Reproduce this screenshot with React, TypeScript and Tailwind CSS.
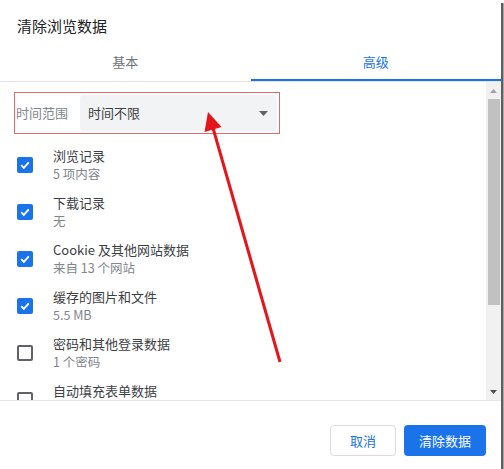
import React from 'react';

const items = [
  { title: '浏览记录', sub: '5 项内容', checked: true },
  { title: '下载记录', sub: '无', checked: true },
  { title: 'Cookie 及其他网站数据', sub: '来自 13 个网站', checked: true },
  { title: '缓存的图片和文件', sub: '5.5 MB', checked: true },
  { title: '密码和其他登录数据', sub: '1 个密码', checked: false },
  { title: '自动填充表单数据', sub: '', checked: false },
];

function Checkbox({ checked }: { checked: boolean }) {
  if (checked) {
    return (
      <div className="w-4 h-4 rounded-[2px] bg-[#1a73e8] flex items-center justify-center shrink-0">
        <svg width="12" height="12" viewBox="0 0 12 12">
          <path d="M2.2 6.2l2.6 2.6 5-5.4" fill="none" stroke="#fff" strokeWidth="1.9" />
        </svg>
      </div>
    );
  }
  return <div className="w-4 h-4 rounded-[2px] border-2 border-[#5f6368] shrink-0" />;
}

export default function App() {
  return (
    <div
      className="relative w-[504px] h-[469px] bg-white overflow-hidden flex"
      style={{ fontFamily: '"Noto Sans CJK SC", "Noto Sans", sans-serif' }}
    >
      <div className="w-[501px] h-full flex flex-col">
        <div className="pt-[16px] pl-[17px] h-[44px] text-[15px] leading-[20px] text-[#202124]">清除浏览数据</div>

        <div className="flex h-[38px] border-b border-[#e4e4e4]">
          <div className="flex-1 flex items-center justify-center text-[13px] text-[#6f7378] pb-[2px]">基本</div>
          <div className="flex-1 flex items-center justify-center text-[13px] text-[#1a73e8] border-b-2 border-[#1a73e8]">高级</div>
        </div>

        <div className="flex h-[318px] shrink-0 overflow-hidden">
          <div className="flex-1 pt-[10px]">
            <div className="ml-[14px] w-[266px] border border-[#e06b6b] pt-[2px] pb-[2px] pl-px pr-[2px] flex items-center">
              <span className="w-[64px] text-[13px] text-[#80868b]">时间范围</span>
              <div className="flex-1 h-[36px] rounded-[4px] bg-[#f1f3f4] flex items-center justify-between pl-[8px] pr-[9px]">
                <span className="text-[13px] text-[#3c4043]">时间不限</span>
                <svg width="9" height="5" viewBox="0 0 9 5">
                  <path d="M0 0h9L4.5 5z" fill="#5f6368" />
                </svg>
              </div>
            </div>

            <div className="mt-[7px]">
              {items.map((it) => (
                <div key={it.title} className="h-[47px] flex items-center">
                  <div className="w-[53px] pl-[17px] flex">
                    <Checkbox checked={it.checked} />
                  </div>
                  <div className="flex flex-col">
                    <span className="h-[18px] text-[13px] leading-[18px] text-[#3c4043]">{it.title}</span>
                    <span className="h-[18px] text-[12.5px] leading-[18px] text-[#80868b]">{it.sub}</span>
                  </div>
                </div>
              ))}
            </div>
          </div>

          <div className="w-[15px] bg-[#f1f1f1] flex flex-col">
            <div className="h-[17px] flex items-center justify-center">
              <svg width="7" height="4" viewBox="0 0 7 4">
                <path d="M0 4h7L3.5 0z" fill="#a3a3a3" />
              </svg>
            </div>
            <div className="h-[206px] ml-[2px] mr-[1px] bg-[#c1c1c1]" />
            <div className="flex-1" />
            <div className="h-[17px] flex items-center justify-center">
              <svg width="7" height="4" viewBox="0 0 7 4">
                <path d="M0 0h7L3.5 4z" fill="#505050" />
              </svg>
            </div>
          </div>
        </div>

        <div className="flex-1 border-t border-[#e8e8e8] flex justify-end items-start pt-[24px] pr-[15px] gap-[8px]">
          <button className="w-[66px] h-[31px] rounded-[4px] border border-[#dadce0] bg-white text-[13px] text-[#1a73e8]">取消</button>
          <button className="w-[82px] h-[31px] rounded-[4px] bg-[#1a73e8] text-[13px] text-white">清除数据</button>
        </div>
      </div>
      <div className="w-[2px] mt-[3px] bg-[#5e5e5e]" />
      <div className="w-px mt-[3px] bg-[#a8a8a8]" />

      <svg className="absolute left-0 top-0 pointer-events-none" width="504" height="469" viewBox="0 0 504 469">
        <line x1="213" y1="128" x2="280" y2="362" stroke="#e3161b" strokeWidth="3" />
        <path d="M208 112L221.5 127L204.5 132Z" fill="#e3161b" />
      </svg>
    </div>
  );
}
